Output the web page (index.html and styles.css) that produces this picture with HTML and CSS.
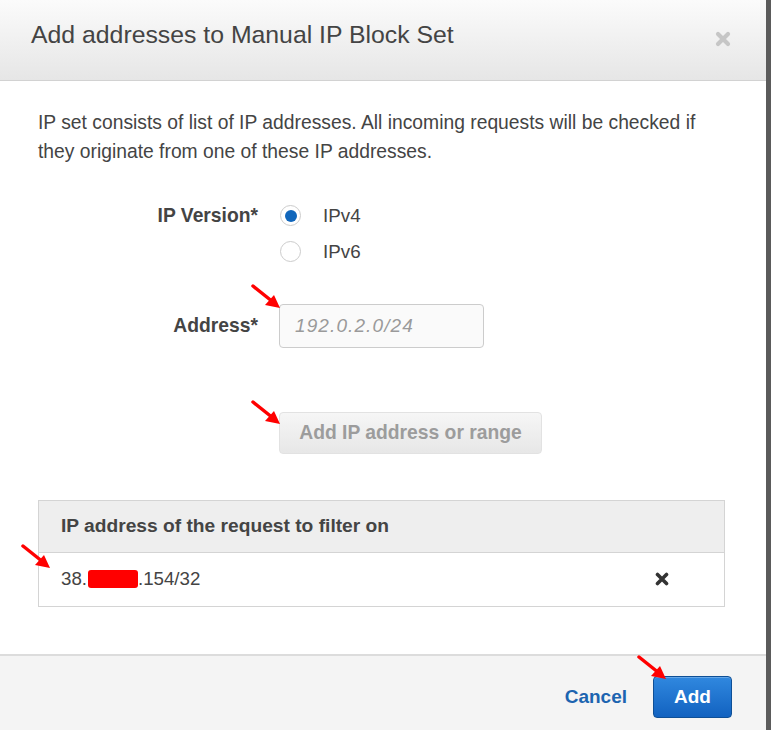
FILE: index.html
```html
<!DOCTYPE html>
<html>
<head>
<meta charset="utf-8">
<link rel="stylesheet" href="styles.css">
</head>
<body>
<div class="dialog">
  <div class="header">
    <h1 class="title">Add addresses to Manual IP Block Set</h1>
    <svg class="close" width="16" height="16" viewBox="0 0 16 16"><path d="M3 3 L13 13 M13 3 L3 13" stroke="#c6c6c6" stroke-width="4.2" stroke-linecap="round"/></svg>
  </div>
  <div class="content">
    <p class="intro">IP set consists of list of IP addresses. All incoming requests will be checked if they originate from one of these IP addresses.</p>
    <div class="form">
      <div class="label version-label">IP Version*</div>
      <div class="radios">
        <label class="radio-row"><span class="radio checked"></span><span>IPv4</span></label>
        <label class="radio-row"><span class="radio"></span><span>IPv6</span></label>
      </div>
      <div class="label address-label">Address*</div>
      <div class="input">192.0.2.0/24</div>
      <div></div>
      <div class="add-range">Add IP address or range</div>
    </div>
    <div class="table">
      <div class="thead">IP address of the request to filter on</div>
      <div class="trow">
        <span class="ip">38.<span class="redact"></span>.154/32</span>
        <svg class="remove" width="14" height="14" viewBox="0 0 14 14"><path d="M2.5 2.5 L11.5 11.5 M11.5 2.5 L2.5 11.5" stroke="#333" stroke-width="3.6" stroke-linecap="round"/></svg>
      </div>
    </div>
  </div>
  <div class="footer">
    <span class="cancel">Cancel</span>
    <span class="add">Add</span>
  </div>
</div>

<svg class="arrow a1" width="40" height="36" viewBox="0 0 40 36"><path d="M2 2 L22 18" stroke="#f00" stroke-width="3.5" stroke-linecap="round"/><path d="M29 24 L14 21 L23 11 Z" fill="#f00"/></svg>
<svg class="arrow a2" width="40" height="36" viewBox="0 0 40 36"><path d="M2 2 L22 18" stroke="#f00" stroke-width="3.5" stroke-linecap="round"/><path d="M29 24 L14 21 L23 11 Z" fill="#f00"/></svg>
<svg class="arrow a3" width="40" height="36" viewBox="0 0 40 36"><path d="M2 2 L22 18" stroke="#f00" stroke-width="3.5" stroke-linecap="round"/><path d="M29 24 L14 21 L23 11 Z" fill="#f00"/></svg>
<svg class="arrow a4" width="40" height="36" viewBox="0 0 40 36"><path d="M2 2 L22 18" stroke="#f00" stroke-width="3.5" stroke-linecap="round"/><path d="M29 24 L14 21 L23 11 Z" fill="#f00"/></svg>
</body>
</html>
```
FILE: styles.css
```css
* { box-sizing: border-box; }
html, body { margin: 0; padding: 0; }
body {
  background: #5b5b5b;
  font-family: "Liberation Sans", Arial, sans-serif;
  color: #444;
  width: 771px;
  height: 730px;
  overflow: hidden;
  position: relative;
}
.dialog {
  width: 766px;
  height: 730px;
  background: #fff;
  display: flex;
  flex-direction: column;
}
.header {
  height: 81px;
  flex: none;
  background: linear-gradient(#fbfbfb, #e6e6e6);
  border-bottom: 1px solid #d2d2d2;
  display: flex;
  align-items: center;
  justify-content: space-between;
  padding: 0 35px 10px 31px;
}
.title {
  margin: 0;
  font-weight: normal;
  font-size: 24.8px;
  color: #444;
}
.close { margin-top: 8px; }
.content {
  flex: 1;
  padding: 27px 41px 0 38px;
}
.intro {
  margin: 0;
  font-size: 19.3px;
  line-height: 29px;
  color: #444;
}
.form {
  display: grid;
  grid-template-columns: 220px auto;
  column-gap: 21px;
  justify-content: start;
  margin-top: 39px;
}
.label {
  text-align: right;
  font-weight: bold;
  font-size: 19.3px;
  color: #444;
}
.version-label { padding-top: 0; }
.radios { display: flex; flex-direction: column; gap: 15px; }
.radio-row {
  display: flex;
  align-items: center;
  gap: 22px;
  font-size: 18.8px;
  color: #444;
  height: 21px;
}
.radio {
  width: 21px;
  height: 21px;
  border-radius: 50%;
  border: 1px solid #ccc;
  background: #fff;
  display: flex;
  align-items: center;
  justify-content: center;
  margin-left: 1px;
}
.radio.checked::after {
  content: "";
  width: 12px;
  height: 12px;
  border-radius: 50%;
  background: #1166bb;
}
.address-label { align-self: center; margin-top: 42px; }
.input {
  margin-top: 42px;
  width: 205px;
  height: 44px;
  border: 1px solid #ccc;
  border-radius: 4px;
  background: #fafafa;
  font-style: italic;
  color: #9a9a9a;
  font-size: 19px;
  letter-spacing: 1.1px;
  line-height: 42px;
  padding-left: 15px;
}
.add-range {
  margin-top: 64px;
  width: 263px;
  height: 42px;
  border: 1px solid #e2e2e2;
  border-radius: 4px;
  background: linear-gradient(#f6f6f6, #e7e7e7);
  color: #9c9c9c;
  font-weight: bold;
  font-size: 19.3px;
  line-height: 40px;
  text-align: center;
}
.table {
  margin-top: 46px;
  border: 1px solid #d4d4d4;
}
.thead {
  height: 52px;
  background: #eeeeee;
  border-bottom: 1px solid #d4d4d4;
  font-weight: bold;
  font-size: 19.2px;
  line-height: 50px;
  padding-left: 22px;
  color: #444;
}
.trow {
  height: 53px;
  display: flex;
  align-items: center;
  justify-content: space-between;
  padding: 0 55px 2px 22px;
  font-size: 18.7px;
}
.ip { display: flex; align-items: center; }
.redact {
  display: inline-block;
  width: 50px;
  height: 18px;
  background: #ff0000;
  border-radius: 3px;
  margin-left: 1px;
}
.footer {
  height: 76px;
  flex: none;
  background: #f4f4f4;
  border-top: 2px solid #dcdcdc;
  display: flex;
  align-items: center;
  justify-content: flex-end;
  padding: 7px 34px 0 0;
  gap: 26px;
}
.cancel {
  color: #1c64b0;
  font-weight: bold;
  font-size: 19px;
}
.add {
  width: 79px;
  height: 42px;
  border: 1px solid #0e4f96;
  border-radius: 4px;
  background: linear-gradient(#3088df, #1262c0);
  color: #fff;
  font-weight: bold;
  font-size: 19px;
  line-height: 40px;
  text-align: center;
  box-shadow: inset 0 1px 0 rgba(255,255,255,0.25);
}
.arrow { position: absolute; }
.a1 { left: 251px; top: 284px; }
.a2 { left: 251px; top: 400px; }
.a3 { left: 21px; top: 544px; }
.a4 { left: 637px; top: 655px; }
```
